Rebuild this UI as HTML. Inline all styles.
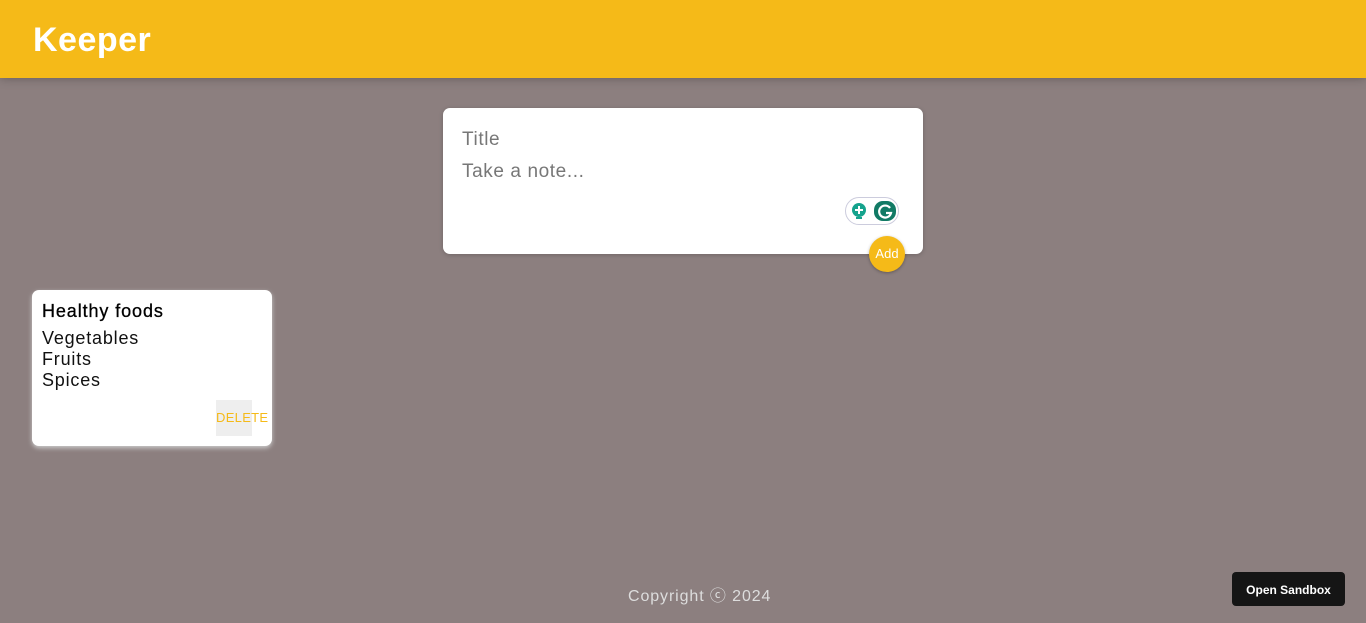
<!DOCTYPE html>
<html><head><style>
body{margin:0;width:1366px;height:623px;background:#8c7f7f;font-family:"Liberation Sans",sans-serif;position:relative;overflow:hidden}
header{position:absolute;left:0;top:0;width:1366px;height:78px;background:#f5ba18;box-shadow:0 0 10px rgba(0,0,0,.3)}
header h1{margin:0;position:absolute;left:33px;top:21px;color:#fff;font-size:34px;font-weight:bold;letter-spacing:0.5px}
.form{position:absolute;left:443px;top:108px;width:480px;height:146px;background:#fff;border-radius:7px;box-shadow:0 1px 5px rgba(0,0,0,.2)}
.ph{position:absolute;left:19px;color:#777;font-size:19px;letter-spacing:0.6px}
.g{position:absolute;left:402px;top:89px;width:54px;height:28px;border:1px solid #ccd;border-radius:14px;box-sizing:border-box}
.add{position:absolute;left:869px;top:236px;width:36px;height:36px;border-radius:50%;background:#f5ba18;color:#fff;font-size:13px;text-align:center;line-height:36px;box-shadow:0 1px 3px rgba(0,0,0,.3)}
.note{position:absolute;left:32px;top:290px;width:240px;height:156px;background:#fff;border-radius:7px;box-shadow:0 2px 5px #ccc}
.note h2{margin:0;position:absolute;left:10px;top:11px;font-size:18px;font-weight:normal;color:#000;letter-spacing:0.9px;-webkit-text-stroke:0.3px #000}
.note p{margin:0;position:absolute;left:10px;top:38px;font-size:18px;line-height:21px;color:#111;letter-spacing:0.8px}
.del{position:absolute;left:184px;top:110px;width:36px;height:36px;background:#eee;color:#f5ba18;font-size:13px;line-height:36px;white-space:nowrap;letter-spacing:0.3px}
footer{position:absolute;left:628px;top:582px;color:#ddd;font-size:16px;letter-spacing:0.9px;white-space:nowrap}
.sb{position:absolute;left:1232px;top:572px;width:113px;height:34px;background:#151515;border-radius:4px;color:#fff;font-size:12px;font-weight:bold;text-align:center;line-height:36px}
</style></head><body>
<header><h1>Keeper</h1></header>
<div class="form">
<div class="ph" style="top:21px">Title</div>
<div class="ph" style="top:53px">Take a note...</div>
<div class="g"><svg width="54" height="28" style="position:absolute;left:-1px;top:-1px"><circle cx="14" cy="13" r="7" fill="#15a38d"/><rect x="11" y="20" width="6" height="2" fill="#15a38d"/><path d="M14 9v8M10 13h8" stroke="#fff" stroke-width="2"/><rect x="29" y="4" width="22" height="20" rx="9" fill="#117a65"/><path d="M45 11a6 6 0 1 0 1 5h-5" stroke="#fff" stroke-width="2.2" fill="none"/></svg></div>
</div>
<div class="add">Add</div>
<div class="note"><h2>Healthy foods</h2><p>Vegetables<br>Fruits<br>Spices</p><div class="del">DELETE</div></div>
<footer>Copyright ⓒ 2024</footer>
<div class="sb">Open Sandbox</div>
</body></html>
